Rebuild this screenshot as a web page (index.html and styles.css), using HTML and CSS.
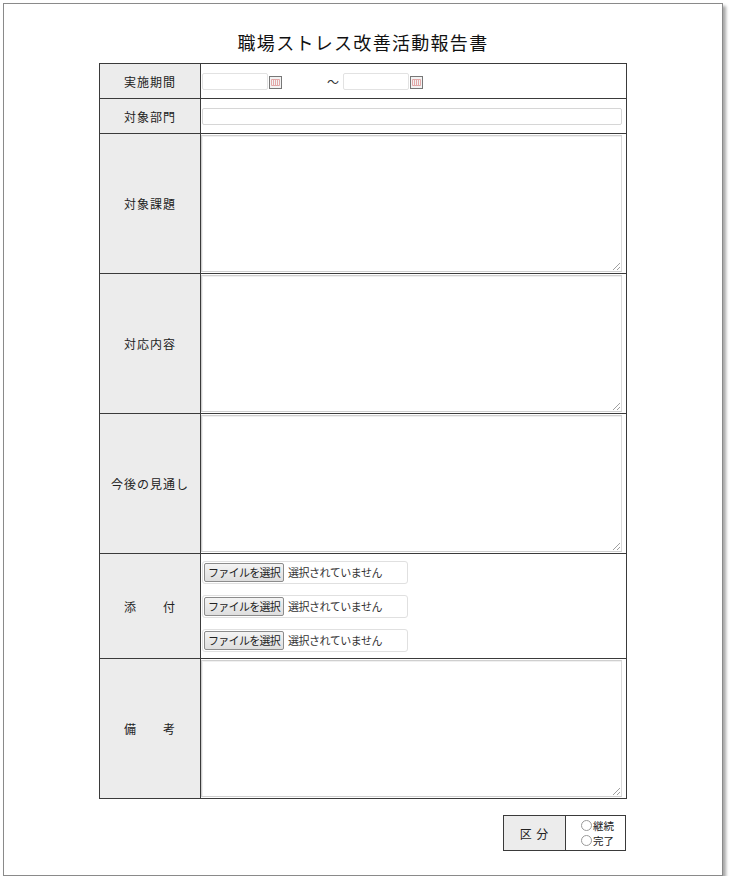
FILE: index.html
```html
<!DOCTYPE html>
<html lang="ja">
<head>
<meta charset="utf-8">
<title>職場ストレス改善活動報告書</title>
<link rel="stylesheet" href="styles.css">
</head>
<body>
<div class="sheet">
  <h1 class="title">職場ストレス改善活動報告書</h1>
  <table class="form">
    <colgroup><col class="c-label"><col class="c-body"></colgroup>
    <tr class="r-short">
      <th>実施期間</th>
      <td class="dates">
        <span class="date"><span class="date-box"></span><span class="cal"><svg width="9" height="7" viewBox="0 0 9 7"><path d="M0.5 0.5H8.5M0.5 6.5H8.5M0.5 0.5V6.5M2.5 0.5V6.5M4.5 0.5V6.5M6.5 0.5V6.5M8.5 0.5V6.5" stroke="#e3a9a9" stroke-width="1" fill="none"/></svg></span></span>
        <span class="tilde">～</span>
        <span class="date"><span class="date-box"></span><span class="cal"><svg width="9" height="7" viewBox="0 0 9 7"><path d="M0.5 0.5H8.5M0.5 6.5H8.5M0.5 0.5V6.5M2.5 0.5V6.5M4.5 0.5V6.5M6.5 0.5V6.5M8.5 0.5V6.5" stroke="#e3a9a9" stroke-width="1" fill="none"/></svg></span></span>
      </td>
    </tr>
    <tr class="r-short">
      <th>対象部門</th>
      <td class="single"><div class="text-box"></div></td>
    </tr>
    <tr class="r-tall">
      <th>対象課題</th>
      <td class="area"><div class="textarea"><span class="grip"></span></div></td>
    </tr>
    <tr class="r-tall">
      <th>対応内容</th>
      <td class="area"><div class="textarea"><span class="grip"></span></div></td>
    </tr>
    <tr class="r-tall">
      <th>今後の見通し</th>
      <td class="area"><div class="textarea"><span class="grip"></span></div></td>
    </tr>
    <tr class="r-files">
      <th><span class="spread">添<span class="gap"></span>付</span></th>
      <td class="files">
        <div class="file"><span class="file-btn">ファイルを選択</span><span class="file-name">選択されていません</span></div>
        <div class="file"><span class="file-btn">ファイルを選択</span><span class="file-name">選択されていません</span></div>
        <div class="file"><span class="file-btn">ファイルを選択</span><span class="file-name">選択されていません</span></div>
      </td>
    </tr>
    <tr class="r-tall">
      <th><span class="spread">備<span class="gap"></span>考</span></th>
      <td class="area"><div class="textarea"><span class="grip"></span></div></td>
    </tr>
  </table>
  <div class="kubun-wrap">
    <table class="kubun">
      <tr>
        <th>区 分</th>
        <td>
          <div class="radio"><span class="dot"></span>継続</div>
          <div class="radio"><span class="dot"></span>完了</div>
        </td>
      </tr>
    </table>
  </div>
</div>
</body>
</html>
```

FILE: styles.css
```css
html, body {
  margin: 0;
  padding: 0;
  background: #ffffff;
}
body {
  font-family: "Noto Sans CJK JP", "Noto Sans", sans-serif;
  color: #222;
}
.sheet {
  margin: 3px 0 0 3px;
  width: 718px;
  height: 845px;
  border: 1px solid #8a8a8a;
  background: #fff;
  box-shadow: 3px 3px 3px #a8a8a8;
  padding-top: 26px;
  box-sizing: content-box;
}
.title {
  margin: 0;
  height: 24px;
  line-height: 24px;
  font-size: 18px;
  font-weight: normal;
  text-align: center;
  letter-spacing: 1.3px;
  color: #111;
}
.form {
  margin: 9px auto 0 95px;
  width: 528px;
  border-collapse: collapse;
  table-layout: fixed;
}
.c-label { width: 101px; }
.form th, .form td {
  border: 1px solid #3a3a3a;
  padding: 0;
}
.form th {
  background: #ececec;
  font-weight: normal;
  font-size: 12px;
  letter-spacing: 1px;
  color: #222;
  text-align: center;
}
.r-short th, .r-short td { height: 34px; }
.r-tall th, .r-tall td { height: 139px; }
.r-files th, .r-files td { height: 104px; }
.form td { vertical-align: middle; }
.dates {
  font-size: 0;
}
.date {
  display: inline-flex;
  align-items: center;
  vertical-align: middle;
}
.date:first-child { margin-left: 1px; }
.date-box {
  display: inline-block;
  width: 64px;
  height: 15px;
  border: 1px solid #e2e2e2;
  border-radius: 2px;
}
.cal {
  display: inline-flex;
  align-items: center;
  justify-content: center;
  width: 11px;
  height: 11px;
  border: 1px solid #777;
  background: #f3f3f3;
  margin-left: 1px;
  margin-top: 2px;
}
.tilde {
  display: inline-block;
  vertical-align: middle;
  font-size: 12px;
  color: #333;
  margin: 0 4px 0 45px;
}
.single { padding: 0; }
.text-box {
  margin-left: 1px;
  width: 418px;
  height: 15px;
  border: 1px solid #d6d6d6;
  border-radius: 2px;
}
.area { vertical-align: top !important; }
.textarea {
  position: relative;
  margin: 1px 0 0 0;
  width: 419px;
  height: 135px;
  border: 1px solid #cfcfcf;
  border-right-color: #dadada;
  box-shadow: inset 1px 1px 0 #f0f0f0;
}
.grip {
  position: absolute;
  right: 1px;
  bottom: 1px;
  width: 7px;
  height: 7px;
  background: linear-gradient(135deg, transparent 45%, #a0a0a0 45%, #a0a0a0 55%, transparent 55%, transparent 72%, #a0a0a0 72%, #a0a0a0 82%, transparent 82%);
}
.spread {
  display: inline-flex;
  align-items: center;
}
.gap { display: inline-block; width: 26px; }
.files {
  padding: 0 !important;
}
.file {
  display: flex;
  align-items: center;
  width: 204px;
  height: 21px;
  margin: 5px 0 0 1px;
  border: 1px solid #e0e0e0;
  border-radius: 3px;
  font-size: 11px;
}
.file:first-child { margin-top: 0; }
.file + .file { margin-top: 11px; }
.file-btn {
  display: inline-block;
  margin-left: 1px;
  height: 17px;
  line-height: 17px;
  padding: 0 3px;
  border: 1px solid #8c8c8c;
  border-radius: 2px;
  background: linear-gradient(#f4f4f4, #dedede);
  color: #222;
  font-size: 11px;
  letter-spacing: -0.7px;
}
.file-name {
  margin-left: 4px;
  color: #333;
  font-size: 11px;
  letter-spacing: -0.5px;
}
.kubun-wrap {
  display: flex;
  justify-content: flex-end;
  width: 622px;
  margin-top: 16px;
}
.kubun {
  border-collapse: collapse;
  table-layout: fixed;
  width: 123px;
}
.kubun th, .kubun td {
  border: 1px solid #3a3a3a;
  height: 34px;
  padding: 0;
}
.kubun th {
  width: 61px;
  background: #ececec;
  font-weight: normal;
  font-size: 12px;
  color: #222;
  letter-spacing: 1px;
}
.kubun td {
  padding-left: 15px;
  vertical-align: middle;
}
.radio {
  display: flex;
  align-items: center;
  height: 15px;
  font-size: 10.5px;
  line-height: 15px;
  color: #222;
}
.dot {
  display: inline-block;
  flex: none;
  width: 9px;
  height: 9px;
  border: 1px solid #9a9a9a;
  border-radius: 50%;
  margin-right: 1px;
  background: #fff;
}
```
